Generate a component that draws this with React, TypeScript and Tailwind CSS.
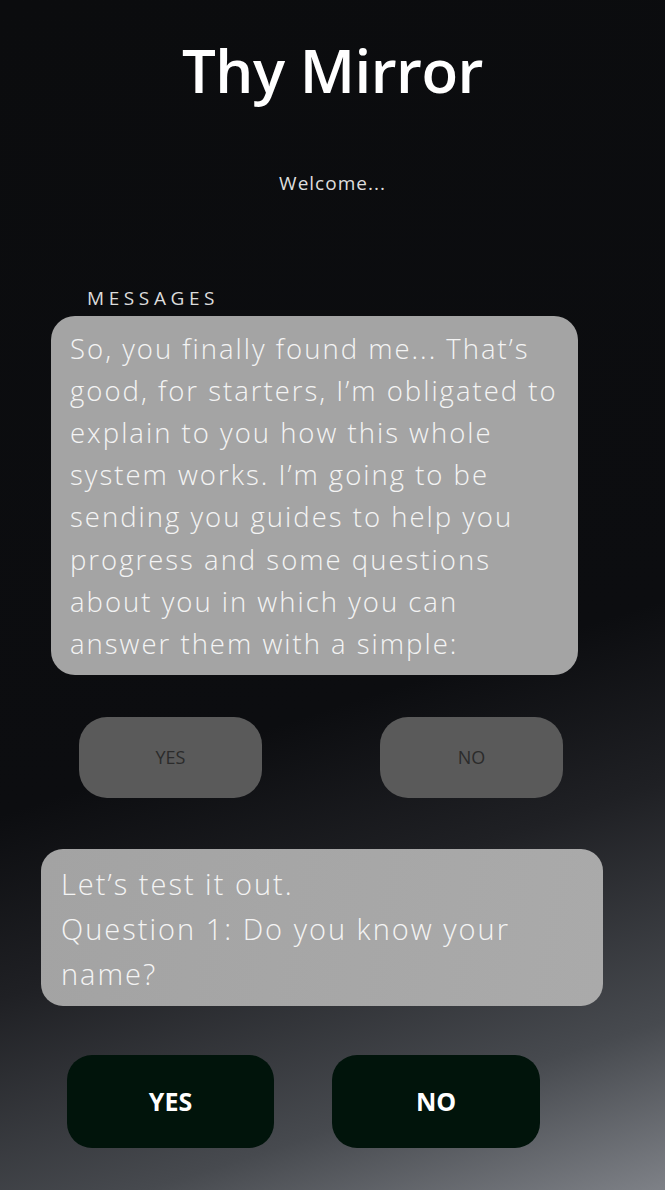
import React from "react";

const font = { fontFamily: '"Open Sans", "Noto Sans", sans-serif' };

export default function App() {
  return (
    <div
      style={font}
      className="min-h-[1190px] w-full overflow-hidden bg-[#0b0c0e] bg-[linear-gradient(162deg,#0b0c0e_0%,#0c0d10_58%,#1f2024_71%,#474a4f_88%,#7e8187_100%)] text-white"
    >
      <div className="flex flex-col items-center pt-[34px]">
        <h1 className="text-[60px] font-semibold leading-[72px] tracking-[-0.5px]">Thy Mirror</h1>
        <p className="mt-[63px] text-[19px] tracking-[1px] text-[#dedede]">Welcome...</p>
      </div>

      <div className="px-[51px] pt-[88px]">
        <p className="pl-[36px] text-[19px] leading-[24px] tracking-[4.6px] text-[#dcdcdc]">MESSAGES</p>
        <div className="mr-[36px] mt-[6px] rounded-[24px] bg-[#a4a4a4] pb-[10px] pl-[19px] pr-[4px] pt-[12px] text-[27.5px] font-light leading-[42.2px] tracking-[2px] text-[#f4f4f4]">
          <div className="whitespace-nowrap">So, you finally found me... That’s</div>
          <div className="whitespace-nowrap">good, for starters, I’m obligated to</div>
          <div className="whitespace-nowrap">explain to you how this whole</div>
          <div className="whitespace-nowrap">system works. I’m going to be</div>
          <div className="whitespace-nowrap">sending you guides to help you</div>
          <div className="whitespace-nowrap">progress and some questions</div>
          <div className="whitespace-nowrap">about you in which you can</div>
          <div className="whitespace-nowrap">answer them with a simple:</div>
        </div>
      </div>

      <div className="mt-[42px] flex justify-between pl-[79px] pr-[102px]">
        <button className="h-[81px] w-[183px] rounded-[28px] bg-[#5a5a5a] text-[18px] text-[#2b2b2b]">YES</button>
        <button className="h-[81px] w-[183px] rounded-[28px] bg-[#5a5a5a] text-[18px] text-[#2b2b2b]">NO</button>
      </div>

      <div className="mx-[41px] mt-[51px] w-[562px] rounded-[22px] bg-[#a6a6a6] bg-[linear-gradient(100deg,#a3a3a3,#aaaaaa)] pb-[10px] pl-[20px] pt-[12px] text-[29px] font-light leading-[45px] tracking-[2px] text-[#f4f4f4]">
        <div className="whitespace-nowrap">Let’s test it out.</div>
        <div className="whitespace-nowrap">Question 1: Do you know your</div>
        <div className="whitespace-nowrap">name?</div>
      </div>

      <div className="mt-[49px] flex gap-[58px] pl-[67px]">
        <button className="h-[93px] w-[207px] rounded-[25px] bg-[#01140b] text-[25px] font-bold text-white">YES</button>
        <button className="h-[93px] w-[208px] rounded-[25px] bg-[#01140b] text-[25px] font-bold text-white">NO</button>
      </div>
    </div>
  );
}
